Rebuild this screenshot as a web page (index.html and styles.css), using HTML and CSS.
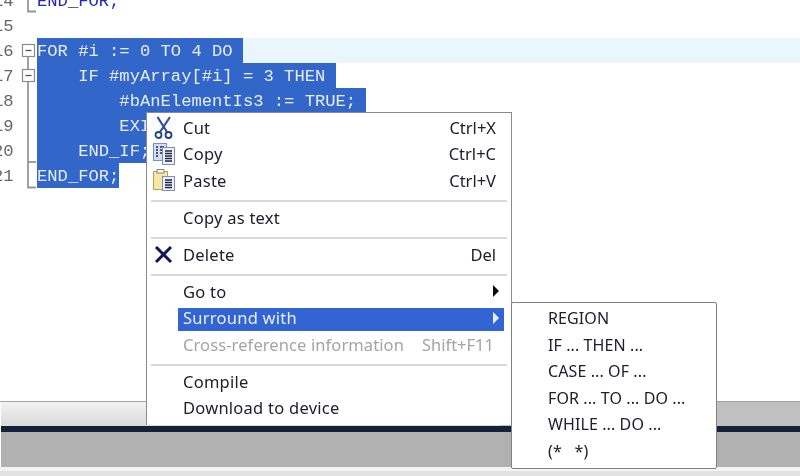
FILE: index.html
```html
<!DOCTYPE html>
<html lang="en">
<head>
<meta charset="utf-8">
<title>Editor context menu</title>
<link rel="stylesheet" href="styles.css">
</head>
<body>
<div class="app">
  <main class="editor">
    <div class="row"><span class="num">14</span><span class="fold"><svg width="23" height="25"><path d="M7 0V23.500H15" class="fl"/></svg></span><span class="code kw">END_FOR;</span></div>
    <div class="row"><span class="num">15</span><span class="fold"></span></div>
    <div class="row current"><span class="num">16</span><span class="fold"><svg width="23" height="25"><rect x="1.500" y="6.500" width="12" height="12" class="fb"/><path d="M4.500 12.500H10.500" class="fm"/><path d="M7 18.500V25" class="fl"/></svg></span><span class="code sel">FOR #i := 0 TO 4 DO </span></div>
    <div class="row"><span class="num">17</span><span class="fold"><svg width="23" height="25"><path d="M7 0V6" class="fl"/><rect x="1.500" y="6.500" width="12" height="12" class="fb"/><path d="M4.500 12.500H10.500" class="fm"/><path d="M7 18.500V25" class="fl"/></svg></span><span class="code sel">    IF #myArray[#i] = 3 THEN </span></div>
    <div class="row"><span class="num">18</span><span class="fold"><svg width="23" height="25"><path d="M7 0V25" class="fl"/></svg></span><span class="code sel">        #bAnElementIs3 := TRUE; </span></div>
    <div class="row"><span class="num">19</span><span class="fold"><svg width="23" height="25"><path d="M7 0V25" class="fl"/></svg></span><span class="code sel">        EXIT; </span></div>
    <div class="row"><span class="num">20</span><span class="fold"><svg width="23" height="25"><path d="M7 0V25" class="fl"/><path d="M7 24H15" class="fl"/></svg></span><span class="code sel">    END_IF; </span></div>
    <div class="row"><span class="num">21</span><span class="fold"><svg width="23" height="25"><path d="M7 0V24.500H15" class="fl"/></svg></span><span class="code sel">END_FOR;</span></div>
  </main>
  <footer class="bottom">
    <div class="tabbar"><div class="tab-left"></div><div class="tab-right"></div></div>
    <div class="navy"></div>
    <div class="graybar"></div>
    <div class="whitebar"></div>
    <div class="lastbar"></div>
  </footer>

  <nav class="menu">
    <div class="item"><span class="ico"><svg width="24" height="24" viewBox="0 0 24 24"><path d="M5.500 2L15 17M18 2L8 17" class="scis"/><circle cx="6.500" cy="20" r="3" class="sring"/><circle cx="16.500" cy="20" r="3" class="sring"/></svg></span><span class="body"><span class="label">Cut</span><span class="key">Ctrl+X</span></span></div>
    <div class="item"><span class="ico"><svg width="24" height="24" viewBox="0 0 24 24"><rect x="1.500" y="1.500" width="13" height="17" class="page"/><path d="M4 5H6M8 5H12M4 8H6M8 8H12M4 11H6M8 11H12M4 14H6" class="lines"/><rect x="10.500" y="5.500" width="12" height="17" class="page2"/><path d="M13 9H20M13 11.500H20M13 14H20M13 16.500H20M13 19H20" class="lines"/></svg></span><span class="body"><span class="label">Copy</span><span class="key">Ctrl+C</span></span></div>
    <div class="item"><span class="ico"><svg width="24" height="24" viewBox="0 0 24 24"><rect x="1.500" y="3.500" width="14" height="18" class="clip"/><rect x="5" y="1.500" width="7" height="3.500" class="clasp"/><rect x="10.500" y="8.500" width="12" height="14" class="page2"/><path d="M13 12H20M13 14.500H20M13 17H20M13 19.500H20" class="lines"/></svg></span><span class="body"><span class="label">Paste</span><span class="key">Ctrl+V</span></span></div>
    <div class="sep"></div>
    <div class="item"><span class="ico"></span><span class="body"><span class="label">Copy as text</span></span></div>
    <div class="sep"></div>
    <div class="item"><span class="ico"><svg width="24" height="24" viewBox="0 0 24 24"><path d="M4 5L19 20M19 5L4 20" class="del"/></svg></span><span class="body"><span class="label">Delete</span><span class="key">Del</span></span></div>
    <div class="sep"></div>
    <div class="item"><span class="ico"></span><span class="body"><span class="label">Go to</span><span class="arrow"></span></span></div>
    <div class="item active"><span class="ico"></span><span class="body"><span class="label">Surround with</span><span class="arrow"></span></span></div>
    <div class="item disabled"><span class="ico"></span><span class="body"><span class="label">Cross-reference information</span><span class="key">Shift+F11</span></span></div>
    <div class="sep"></div>
    <div class="item"><span class="ico"></span><span class="body"><span class="label">Compile</span></span></div>
    <div class="item"><span class="ico"></span><span class="body"><span class="label">Download to device</span></span></div>
  </nav>

  <nav class="submenu">
    <div class="subitem">REGION</div>
    <div class="subitem">IF ... THEN ...</div>
    <div class="subitem">CASE ... OF ...</div>
    <div class="subitem">FOR ... TO ... DO ...</div>
    <div class="subitem">WHILE ... DO ...</div>
    <div class="subitem">(*   *)</div>
  </nav>
</div>
</body>
</html>
```
FILE: styles.css
```css
html, body { margin: 0; padding: 0; background: #fff; }
.app {
  position: relative;
  width: 800px;
  height: 476px;
  overflow: hidden;
  display: flex;
  flex-direction: column;
  background: #fff;
  filter: blur(0.45px);
}
.editor {
  flex: 1;
  min-height: 0;
  margin-top: -12px;
  overflow: hidden;
}
.row {
  display: flex;
  height: 25px;
  line-height: 27px;
  font-family: "Liberation Mono", monospace;
  font-size: 17.17px;
  font-weight: 400;
}
.row.current { background: linear-gradient(to right, #fff 243px, #e9f7fd 243px); }
.num {
  width: 13.5px;
  display: flex;
  justify-content: flex-end;
  overflow: hidden;
  color: #666;
  flex: none;
}
.fold { width: 23.5px; flex: none; display: block; height: 25px; }
.fold svg { display: block; margin-left: 7.500px; overflow: visible; }
.fl { fill: none; stroke: #969696; stroke-width: 1.800; }
.fb { fill: #fff; stroke: #8c8c8c; stroke-width: 1.200; }
.fm { fill: none; stroke: #555; stroke-width: 1.300; }
.code { white-space: pre; }
.kw { color: #2626b8; }
.sel { background: #3266c9; color: #e6edf9; }

.bottom { flex: none; display: flex; flex-direction: column; }
.tabbar { display: flex; height: 24px; border-top: 1px solid #a3a3a3; padding-left: 1px; }
.tab-left { flex: 1; background: linear-gradient(#f2f2f2, #dadada); }
.tab-right { width: 300px; background: #c0c0c0; }
.navy { height: 6px; background: #15203a; margin-left: 1px; }
.graybar { height: 35px; background: #b1b1b1; margin-left: 1px; }
.whitebar { height: 4px; background: #f4f4f4; }
.lastbar { height: 5px; background: #e2e2e2; }

.menu {
  position: absolute;
  left: 146px;
  top: 112px;
  width: 364px;
  height: 311px;
  padding-top: 1px;
  background: #fff;
  border: 1px solid #8a8a8a;
  border-bottom: 0;
  font-family: "Noto Sans", sans-serif;
  font-size: 16.5px;
  letter-spacing: 0.25px;
  color: #20202e;
}
.item { display: flex; height: 26.500px; align-items: center; }
.ico { width: 31px; height: 26px; flex: none; display: flex; align-items: center; justify-content: center; padding-left: 2px; box-sizing: border-box; }
.body {
  flex: 1;
  height: 23px;
  margin-right: 7px;
  padding: 0 8px 0 5px;
  display: flex;
  align-items: center;
  justify-content: space-between;
  line-height: 23px;
}
.key { letter-spacing: 0; }
.active .body {
  box-sizing: border-box;
  margin-top: 3px;
  padding-bottom: 3px;
  background: #3265d3;
  color: #e8eefb;
}
.disabled .body { color: #a4a4a8; }
.disabled .label { letter-spacing: 0.1px; }
.disabled .key { margin-right: 2px; }
.arrow {
  width: 0;
  height: 0;
  border-left: 6px solid #0c0c14;
  border-top: 6px solid transparent;
  border-bottom: 6px solid transparent;
  margin-right: -3px;
}
.active .arrow { border-left-color: #e8eefb; }
.sep { height: 2px; margin: 6px 4px 2.500px 4px; background: #d9d9d9; }

.scis { fill: none; stroke: #2f4f98; stroke-width: 2.200; }
.sring { fill: #fff; stroke: #1f4286; stroke-width: 1.800; }
.page { fill: #d3dcf2; stroke: #7c8cc8; stroke-width: 1; }
.page2 { fill: #eef1fa; stroke: #7c8cc8; stroke-width: 1; }
.lines { fill: none; stroke: #20264a; stroke-width: 1.300; }
.clip { fill: #f6e6a2; stroke: #b9a060; stroke-width: 1; }
.clasp { fill: #f5f5f5; stroke: #8a8a8a; stroke-width: 1; }
.del { fill: none; stroke: #14145c; stroke-width: 3; }

.submenu {
  position: absolute;
  left: 511px;
  top: 302px;
  width: 204px;
  height: 163px;
  padding-top: 2px;
  background: #fff;
  border: 1px solid #808080;
  border-radius: 2px;
  font-family: "Noto Sans", sans-serif;
  font-size: 16px;
  letter-spacing: 0.1px;
  color: #20202e;
}
.subitem { height: 26.500px; line-height: 26.500px; padding-left: 36px; white-space: pre; }
```
